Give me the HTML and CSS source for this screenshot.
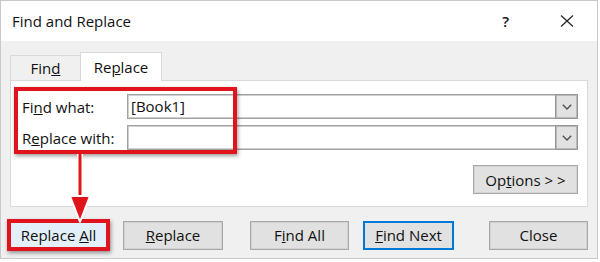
FILE: index.html
```html
<!DOCTYPE html>
<html lang="en">
  <head>
    <meta charset="UTF-8" />
    <title>Find and Replace</title>
    <link rel="stylesheet" href="styles.css">
  </head>
  <body>
    <div class="dialog">
      <div class="titlebar">
        <span class="title">Find and Replace</span>
        <span class="help">?</span>
        <svg class="close-x" width="14" height="12" viewBox="0 0 14 12">
          <path d="M1 0.5 L13 11.5 M13 0.5 L1 11.5" stroke="#222" stroke-width="1.2" fill="none" />
        </svg>
      </div>
      <div class="content">
        <div class="tabs">
          <div class="tab">Fin<u>d</u></div>
          <div class="tab active">Re<u>p</u>lace</div>
        </div>
        <div class="panel">
          <div class="row">
            <label>Fi<u>n</u>d what:</label>
            <div class="combo">
              <span class="combo-text">[Book1]</span>
              <span class="combo-btn">
                <svg width="10" height="6" viewBox="0 0 10 6"><path d="M0.8 0.8 L5 5 L9.2 0.8" stroke="#505050" stroke-width="1.4" fill="none" /></svg>
              </span>
            </div>
          </div>
          <div class="row">
            <label>R<u>e</u>place with:</label>
            <div class="combo">
              <span class="combo-text"></span>
              <span class="combo-btn">
                <svg width="10" height="6" viewBox="0 0 10 6"><path d="M0.8 0.8 L5 5 L9.2 0.8" stroke="#505050" stroke-width="1.4" fill="none" /></svg>
              </span>
            </div>
          </div>
          <div class="panel-foot">
            <button class="btn options">Op<u>t</u>ions &gt; &gt;</button>
          </div>
        </div>
        <div class="actions">
          <button class="btn replace-all">Replace <u>A</u>ll</button>
          <button class="btn replace"><u>R</u>eplace</button>
          <button class="btn find-all">F<u>i</u>nd All</button>
          <button class="btn find-next"><u>F</u>ind Next</button>
          <button class="btn close">Close</button>
        </div>
      </div>

      <!-- annotation marks -->
      <div class="mark-fields"></div>
      <svg class="arrow" width="30" height="74" viewBox="0 0 30 74">
        <line x1="15" y1="2" x2="15" y2="46" stroke="#fff" stroke-width="6" />
        <line x1="15" y1="2" x2="15" y2="46" stroke="#e0141c" stroke-width="3" />
        <path d="M5 44 L25 44 L15 70 Z" fill="#e0141c" stroke="#fff" stroke-width="2" stroke-linejoin="round" />
      </svg>
    </div>
  </body>
</html>
```

FILE: styles.css
```css
body {
  margin: 0;
  background-color: #fff;
}
.dialog {
  position: relative;
  width: 598px;
  height: 259px;
  box-sizing: border-box;
  border: 1px solid #c9c9c9;
  background-color: #f0f0f0;
  font-family: "Open Sans", sans-serif;
  font-size: 15px;
  color: #111;
}
.titlebar {
  height: 40px;
  background-color: #fff;
  display: flex;
  align-items: center;
  padding-left: 11px;
}
.help {
  margin-left: auto;
  margin-right: 51px;
  font-weight: 600;
}
.close-x {
  margin-right: 23px;
}
.content {
  padding: 11px 9px 0 9px;
}
.tabs {
  display: flex;
  align-items: flex-end;
  height: 28px;
}
.tab {
  width: 70px;
  height: 25px;
  box-sizing: border-box;
  border: 1px solid #d9d9d9;
  border-bottom: none;
  border-right: none;
  display: flex;
  align-items: center;
  justify-content: center;
}
.tab.active {
  width: 82px;
  height: 29px;
  margin-bottom: -1px;
  border-right: 1px solid #d9d9d9;
  background-color: #fff;
  position: relative;
  z-index: 1;
}
.panel {
  width: 578px;
  height: 127px;
  box-sizing: border-box;
  border: 1px solid #d9d9d9;
  background-color: #fff;
  padding: 13px 9px 0 11px;
}
.row {
  display: flex;
  align-items: center;
  height: 25px;
}
.row + .row {
  margin-top: 6px;
}
.row label {
  width: 105px;
}
.combo {
  flex: 1;
  height: 25px;
  box-sizing: border-box;
  display: flex;
  border: 1px solid #a2a2a2;
  box-shadow: inset 0 0 0 1px #cfcfcf;
}
.combo-text {
  flex: 1;
  padding-left: 3px;
  line-height: 23px;
}
.combo-btn {
  width: 23px;
  margin: -1px -1px -1px 0;
  box-sizing: border-box;
  border: 1px solid #969696;
  box-shadow: inset 0 0 0 1px #b8b8b8;
  background-color: #e1e1e1;
  display: flex;
  align-items: center;
  justify-content: center;
}
.panel-foot {
  display: flex;
  justify-content: flex-end;
  margin-top: 15px;
}
.btn {
  height: 29px;
  padding: 0;
  box-sizing: border-box;
  border: 1px solid #a8a8a8;
  box-shadow: inset 0 0 0 1px #d2d2d2;
  background-color: #e1e1e1;
  font-family: inherit;
  font-size: 15px;
  color: #111;
}
.options {
  width: 105px;
}
.actions {
  display: flex;
  align-items: center;
  margin-top: 12px;
  margin-left: -3px;
}
.replace-all {
  width: 103px;
  height: 32px;
  border: 4px solid #e0141c;
  background-color: #e3effa;
  box-shadow: 1px 2px 4px rgba(0, 0, 0, 0.4);
}
.replace {
  width: 100px;
  margin-left: 13px;
}
.find-all {
  width: 99px;
  margin-left: 27px;
}
.find-next {
  width: 91px;
  margin-left: 14px;
  border: 2px solid #0078d7;
  box-shadow: none;
}
.close {
  width: 99px;
  margin-left: 35px;
}
.mark-fields {
  position: absolute;
  left: 13px;
  top: 86px;
  width: 223px;
  height: 67px;
  box-sizing: border-box;
  border: 4px solid #e0141c;
  box-shadow: 1px 2px 4px rgba(0, 0, 0, 0.4);
}
.arrow {
  position: absolute;
  left: 64px;
  top: 151px;
}
```
